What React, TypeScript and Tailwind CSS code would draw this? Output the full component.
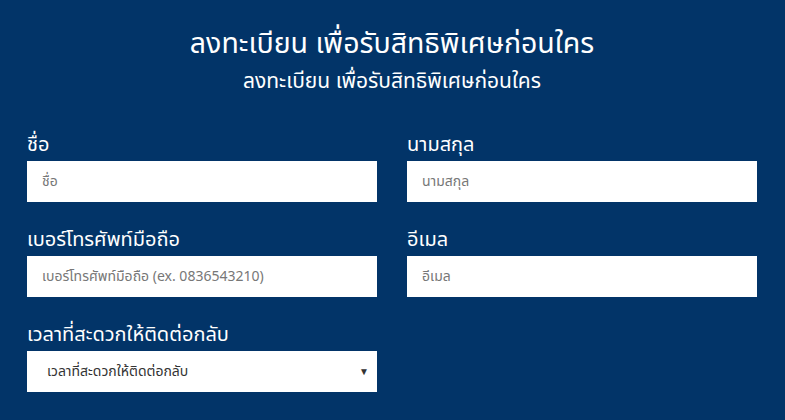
import React from "react";

const FONT = "font-['Noto_Sans_Thai','Noto_Sans','Liberation_Sans',sans-serif]";

function Field({ label, placeholder }: { label: string; placeholder: string }) {
  return (
    <div className="flex flex-col">
      <label className="mb-px text-[20px] leading-[30px] text-white">{label}</label>
      <input
        type="text"
        placeholder={placeholder}
        className="h-[41px] w-full bg-white px-[15px] text-[14px] text-[#333] outline-none placeholder:text-[#777]"
      />
    </div>
  );
}

export default function App() {
  return (
    <div className={`h-[420px] w-full overflow-hidden bg-[#023468] pl-[27px] pr-[28px] pt-[25px] ${FONT}`}>
      <div className="text-center text-white">
        <h1 className="text-[28.5px] leading-[40px]">ลงทะเบียน เพื่อรับสิทธิพิเศษก่อนใคร</h1>
        <p className="mt-[3px] text-[21px] leading-[28px]">ลงทะเบียน เพื่อรับสิทธิพิเศษก่อนใคร</p>
      </div>

      <form className="mt-[34px] grid grid-cols-2 gap-x-[30px] gap-y-[23px]">
        <Field label="ชื่อ" placeholder="ชื่อ" />
        <Field label="นามสกุล" placeholder="นามสกุล" />
        <Field label="เบอร์โทรศัพท์มือถือ" placeholder="เบอร์โทรศัพท์มือถือ (ex. 0836543210)" />
        <Field label="อีเมล" placeholder="อีเมล" />
        <div className="flex flex-col">
          <label className="mb-px text-[20px] leading-[30px] text-white">เวลาที่สะดวกให้ติดต่อกลับ</label>
          <div className="relative h-[41px] bg-white">
            <select className="h-full w-full appearance-none bg-white pl-[20px] pr-8 text-[14px] text-[#333] outline-none">
              <option>เวลาที่สะดวกให้ติดต่อกลับ</option>
            </select>
            <span className="pointer-events-none absolute right-[8px] top-1/2 -translate-y-1/2 text-[10px] text-[#333]">▼</span>
          </div>
        </div>
      </form>
    </div>
  );
}
